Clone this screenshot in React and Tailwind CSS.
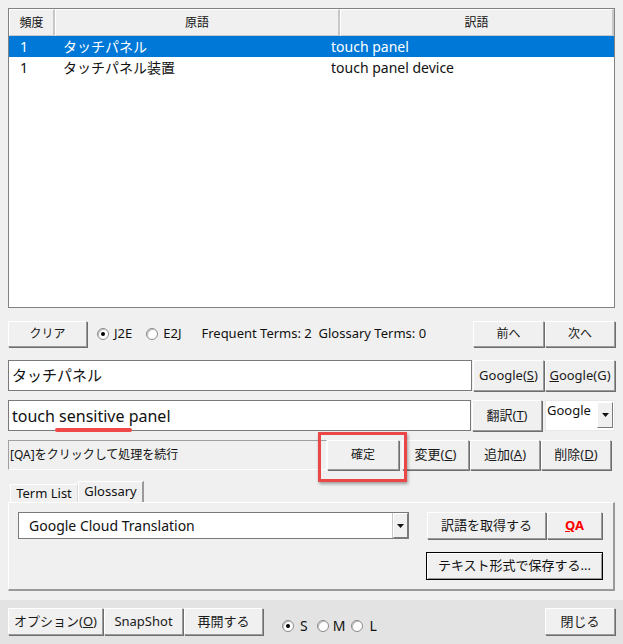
import React from "react";

const F = { fontFamily: '"Noto Sans", "Noto Sans CJK JP", sans-serif' };

function Btn({ children, className = "" }) {
  return (
    <div
      className={
        "flex items-center justify-center bg-[#f0f0f0] border border-t-white border-l-white border-r-[#9a9a9a] border-b-[#9a9a9a] shadow-[1px_1px_0_#6e6e6e] text-[12px] text-[#1a1a1a] " +
        className
      }
    >
      {children}
    </div>
  );
}

function Radio({ checked, label, className = "", gap = "gap-[5px]" }) {
  return (
    <div className={"flex items-center " + gap + " " + className}>
      <span className="w-[12px] h-[12px] rounded-full bg-white border border-[#8a8a8a] shadow-[inset_1px_1px_0_#bdbdbd] flex items-center justify-center">
        {checked && <span className="w-[4px] h-[4px] rounded-full bg-black" />}
      </span>
      <span>{label}</span>
    </div>
  );
}

function Arrow() {
  return (
    <svg width="7" height="4" viewBox="0 0 7 4">
      <path d="M0 0 H7 L3.5 4 Z" fill="#111" />
    </svg>
  );
}

export default function App() {
  return (
    <div style={F} className="w-[623px] h-[644px] bg-[#f0f0f0] flex flex-col text-[#111] overflow-hidden">
      <div className="flex flex-col px-[8px] pt-[8px] relative">
        {/* List view */}
        <div className="h-[300px] border border-[#828282] bg-white flex flex-col">
          <div className="flex h-[27px] text-[12px] bg-[#f0f0f0]">
            <div className="w-[46px] flex items-center justify-center border-t border-l border-white border-r-2 border-r-[#c8c8c8] border-b border-b-[#c8c8c8]">頻度</div>
            <div className="w-[285px] flex items-center justify-center border-t border-l border-white border-r-2 border-r-[#c8c8c8] border-b border-b-[#c8c8c8]">原語</div>
            <div className="flex-1 flex items-center justify-center border-t border-l border-white border-r-2 border-r-[#c8c8c8] border-b border-b-[#c8c8c8]">訳語</div>
          </div>
          <div className="flex h-[21px] items-center bg-[#0078d7] text-white text-[14px]">
            <span className="w-[54px] pl-[11px]">1</span>
            <span className="w-[268px]">タッチパネル</span>
            <span>touch panel</span>
          </div>
          <div className="flex h-[21px] items-center text-[14px]">
            <span className="w-[54px] pl-[11px]">1</span>
            <span className="w-[268px]">タッチパネル装置</span>
            <span>touch panel device</span>
          </div>
        </div>

        {/* Controls row */}
        <div className="flex items-center h-[27px] mt-[12px] text-[13px]">
          <Btn className="w-[79px] h-[26px]">クリア</Btn>
          <Radio checked label="J2E" className="ml-[10px]" />
          <Radio label="E2J" className="ml-[14px]" />
          <span className="ml-[20px]">Frequent Terms: 2&nbsp;&nbsp;Glossary Terms: 0</span>
          <div className="flex-1" />
          <Btn className="w-[71px] h-[26px]">前へ</Btn>
          <Btn className="w-[70px] h-[26px] ml-[1px]">次へ</Btn>
        </div>

        {/* Source row */}
        <div className="flex h-[31px] mt-[13px]">
          <div className="flex-1 border border-[#7a7a7a] bg-white flex items-center pl-[3px] text-[15px]">タッチパネル</div>
          <Btn className="w-[71px] h-[31px] ml-[1px] text-[13px]">Google(<u>S</u>)</Btn>
          <Btn className="w-[70px] h-[31px] ml-[1px] text-[13px]"><u>G</u>oogle(G)</Btn>
        </div>

        {/* Target row */}
        <div className="flex h-[31px] mt-[9px] relative">
          <div className="flex-1 border border-[#7a7a7a] bg-white flex items-center pl-[3px] text-[16px]">touch sensitive panel</div>
          <Btn className="w-[70px] h-[31px] ml-[1px] text-[13px]">翻訳(<u>T</u>)</Btn>
          <div className="w-[70px] h-[31px] ml-[3px] bg-white border border-[#e8e8e8] flex">
            <span className="flex-1 text-[13px] pl-[1px] leading-[18px]">Google</span>
            <div className="w-[16px] h-[26px] mt-[1px] mr-[1px] flex items-center justify-center bg-[#f0f0f0] border border-t-white border-l-white border-r-[#7a7a7a] border-b-[#7a7a7a]">
              <Arrow />
            </div>
          </div>
          <div className="absolute left-[47px] top-[28px] w-[77px] h-[4px] rounded-full bg-[#f04848]" />
        </div>

        {/* Status row */}
        <div className="flex h-[31px] mt-[9px] relative">
          <div className="w-[319px] h-[30px] border border-[#a0a0a0] border-r-white border-b-white flex items-center pl-[1px] text-[12px]">[QA]をクリックして処理を続行</div>
          <Btn className="w-[72px] h-[30px]">確定</Btn>
          <Btn className="w-[67px] h-[30px] ml-[3px] text-[13px]">変更(<u>C</u>)</Btn>
          <Btn className="w-[70px] h-[30px] ml-[1px] text-[13px]">追加(<u>A</u>)</Btn>
          <Btn className="w-[70px] h-[30px] ml-[1px] text-[13px]">削除(<u>D</u>)</Btn>
          <div className="absolute left-[310px] top-[-8px] w-[89px] h-[50px] border-[3px] border-[#ea4848] shadow-[1px_2px_3px_rgba(0,0,0,0.35)]" />
        </div>

        {/* Tabs */}
        <div className="flex h-[20px] mt-[11px] ml-[2px] text-[13px] items-end">
          <div className="w-[68px] h-[18px] flex items-center justify-center border border-b-0 border-[#d9d9d9] border-t-white border-l-white bg-[#f0f0f0] shadow-[1px_0_0_#a0a0a0]">Term List</div>
          <div className="w-[66px] h-[21px] flex items-center justify-center border-t border-l border-white border-r-2 border-r-[#9a9a9a] bg-[#f0f0f0] relative z-10">Glossary</div>
        </div>
        <div className="h-[89px] border border-t-white border-l-white border-r-2 border-r-[#9a9a9a] border-b-2 border-b-[#9a9a9a] flex flex-col pl-[9px] pr-[9px] pt-[9px]">
          <div className="flex">
            <div className="w-[391px] h-[27px] bg-white border border-[#7a7a7a] flex">
              <span className="flex-1 flex items-center pl-[10px] text-[14px] text-[#111]">Google Cloud Translation</span>
              <div className="w-[15px] h-[25px] flex items-center justify-center bg-[#f0f0f0] border border-t-white border-l-white border-r-[#7a7a7a] border-b-[#7a7a7a] shadow-[-1px_0_0_#c8c8c8]">
                <Arrow />
              </div>
            </div>
            <div className="flex-1" />
            <Btn className="w-[119px] h-[27px] text-[13px]">訳語を取得する</Btn>
            <Btn className="w-[55px] h-[27px] ml-[1px] mr-[2px] text-[13px]">
              <span className="text-[#ff0000] font-bold"><u>Q</u>A</span>
            </Btn>
          </div>
          <div className="flex justify-end mt-[13px] mr-[1px]">
            <div className="w-[177px] h-[28px] flex items-center justify-center border border-black bg-[#f0f0f0] text-[13px] shadow-[inset_1px_1px_0_white,inset_-1px_-1px_0_#9a9a9a]">テキスト形式で保存する...</div>
          </div>
        </div>
      </div>

      {/* Bottom bar */}
      <div className="flex-1 mt-[9px] bg-[#e3e3e3] flex items-start px-[8px] pt-[8px] text-[12px]">
        <Btn className="w-[95px] h-[27px] text-[13px]">オプション(<u>O</u>)</Btn>
        <Btn className="w-[79px] h-[27px] ml-[1px] text-[13px]">SnapShot</Btn>
        <Btn className="w-[79px] h-[27px] ml-[1px] text-[13px]">再開する</Btn>
        <div className="flex items-center h-[27px] ml-[19px] text-[14px] mt-[4px]">
          <Radio checked label="S" gap="gap-[6px]" />
          <Radio label="M" gap="gap-[4px]" className="ml-[9px]" />
          <Radio label="L" gap="gap-[6px]" className="ml-[6px]" />
        </div>
        <div className="flex-1" />
        <Btn className="w-[70px] h-[27px] text-[13px]">閉じる</Btn>
      </div>
    </div>
  );
}
